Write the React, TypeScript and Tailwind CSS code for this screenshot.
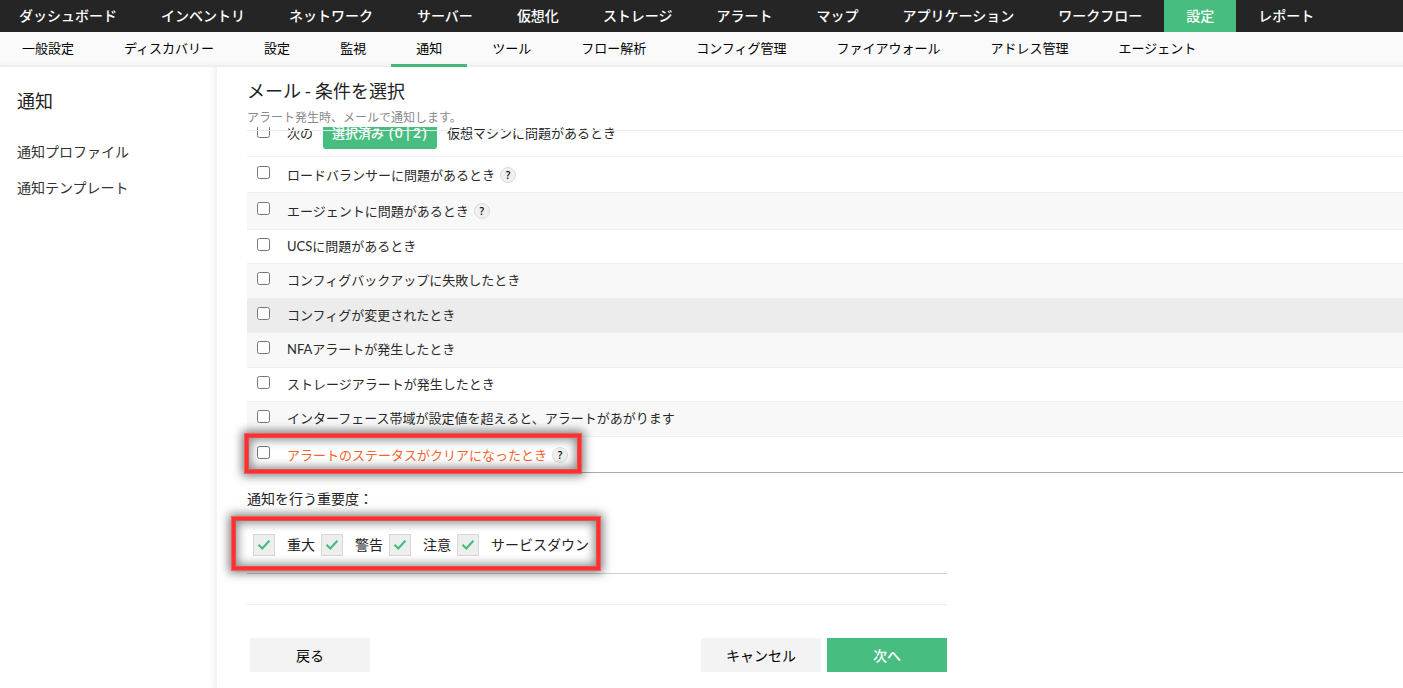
import React, { useState } from 'react';

const mainTabs = [
  'ダッシュボード',
  'インベントリ',
  'ネットワーク',
  'サーバー',
  '仮想化',
  'ストレージ',
  'アラート',
  'マップ',
  'アプリケーション',
  'ワークフロー',
  '設定',
  'レポート',
];

const subTabs = [
  '一般設定',
  'ディスカバリー',
  '設定',
  '監視',
  '通知',
  'ツール',
  'フロー解析',
  'コンフィグ管理',
  'ファイアウォール',
  'アドレス管理',
  'エージェント',
];

const criteria = [
  { label: 'ロードバランサーに問題があるとき', help: true, row: 'h-9 border-[#efefef]' },
  { label: 'エージェントに問題があるとき', help: true, row: 'h-[37px] bg-[#f8f8f8] border-[#efefef]' },
  { label: 'UCSに問題があるとき', row: 'h-[34px] border-[#efefef]' },
  { label: 'コンフィグバックアップに失敗したとき', row: 'h-[35px] bg-[#f8f8f8] border-[#efefef]' },
  { label: 'コンフィグが変更されたとき', row: 'h-[34px] bg-[#ececec] border-[#efefef]' },
  { label: 'NFAアラートが発生したとき', row: 'h-[35px] bg-[#f8f8f8] border-[#efefef]' },
  { label: 'ストレージアラートが発生したとき', row: 'h-[34px] border-[#efefef]' },
  { label: 'インターフェース帯域が設定値を超えると、アラートがあがります', row: 'h-[35px] bg-[#f8f8f8] border-[#efefef]' },
  { label: 'アラートのステータスがクリアになったとき', help: true, active: true, row: 'h-9 border-[#aaaaaa]' },
];

const severities = ['重大', '警告', '注意', 'サービスダウン'];

const HelpIcon = () => (
  <span className="ml-[5px] mt-2.5 flex h-4 w-4 items-center justify-center rounded-full border border-[#dcdcdc] bg-[#f0f0f0] font-['Open_Sans'] text-[10px] font-semibold leading-none text-black">
    ?
  </span>
);

const Highlight = ({ className }) => (
  <div
    className={`pointer-events-none absolute border-[3px] border-[#ff3030] shadow-[0_0_0_1px_#e86060,inset_0_0_0_1px_#e05050,0_0_9px_3px_rgba(0,0,0,0.5),inset_0_0_10px_3px_rgba(0,0,0,0.45)] ${className}`}
  />
);

const App = () => {
  const [checked, setChecked] = useState({});

  const toggle = (label) => setChecked((prev) => ({ ...prev, [label]: !prev[label] }));

  return (
    <div className="h-[688px] w-full overflow-hidden bg-white font-['Lato','Noto_Sans_CJK_JP',sans-serif] text-[#222]">
      <nav className="h-8 overflow-hidden bg-[#252525]">
        <div className="-ml-[3px] flex h-8">
          {mainTabs.map((tab) => (
            <a
              key={tab}
              className={`shrink-0 px-[22px] text-sm font-medium leading-[31px] text-white ${tab === '設定' ? 'bg-[#48bd80]' : ''}`}
            >
              {tab}
            </a>
          ))}
        </div>
      </nav>
      <nav className="h-[35px] overflow-hidden bg-[#fafafa] shadow-[inset_0_-4px_4px_-3px_rgba(0,0,0,0.09)]">
        <div className="-ml-[3px] flex h-[35px]">
          {subTabs.map((tab) => (
            <a
              key={tab}
              className={`shrink-0 border-b-[3px] px-[25px] text-[13px] leading-[33px] text-black ${tab === '通知' ? 'border-[#45b97c]' : 'border-transparent'}`}
            >
              {tab}
            </a>
          ))}
        </div>
      </nav>

      <div className="flex h-[621px]">
        <aside className="w-[217px] shrink-0 pl-[17px] pt-5 shadow-[inset_-9px_0_8px_-8px_rgba(0,0,0,0.09)]">
          <h2 className="text-lg leading-7">通知</h2>
          <ul className="mt-[18px] text-sm text-[#333]">
            <li className="h-9 leading-[37px]">通知プロファイル</li>
            <li className="h-9 leading-[37px]">通知テンプレート</li>
          </ul>
        </aside>

        <main className="relative min-w-0 grow pl-[30px]">
          <header className="h-[60px] pt-2.5">
            <h1 className="text-lg leading-7 [word-spacing:-1px]">メール - 条件を選択</h1>
            <p className="mt-1 text-xs leading-[18px] text-[#8a8a8a]">アラート発生時、メールで通知します。</p>
          </header>

          <div className="relative overflow-hidden">
            <div className="absolute inset-x-0 top-[3px] z-10 h-px bg-[#ececec]" />
            <div className="-mt-[11px] flex h-[41px] border-b border-[#efefef] pl-2.5 text-[13px]">
              <input type="checkbox" className="mt-[9px] h-[13px] w-[13px] shrink-0" />
              <span className="ml-[17px] leading-[34px]">次の</span>
              <span className="ml-2.5 flex h-[33px] w-[114px] justify-center rounded-[3px] bg-[#48bd80] text-[13px] font-medium leading-[34px] text-white">
                選択済み
                <span className="ml-[5px] font-['Noto_Sans'] text-sm leading-[34px] tracking-[1.3px]">(0|2)</span>
              </span>
              <span className="ml-2.5 leading-[34px]">仮想マシンに問題があるとき</span>
            </div>
            {criteria.map((item) => (
              <div key={item.label} className={`flex border-b pl-2.5 text-[13px] text-[#2a2a2a] ${item.row}`}>
                <input
                  type="checkbox"
                  checked={!!checked[item.label]}
                  onChange={() => toggle(item.label)}
                  className={`h-[13px] w-[13px] shrink-0 ${item.help ? 'mt-[9px]' : 'mt-2'}`}
                />
                <span
                  className={`ml-[17px] flex ${item.help ? 'leading-9' : 'leading-8'} ${item.active ? 'text-[#f8622c]' : ''}`}
                >
                  {item.label}
                  {item.help && <HelpIcon />}
                </span>
              </div>
            ))}
          </div>

          <p className="mt-3.5 h-6 text-sm leading-[23px]">通知を行う重要度：</p>
          <div className="mt-[23px] flex h-[40px] w-[700px] gap-1.5 border-b border-[#d2d2d2] pl-1.5 text-sm">
            {severities.map((s) => (
              <label key={s} className="flex h-[22px] items-center gap-3">
                <span className="flex h-[22px] w-[22px] items-center justify-center border border-[#d8d8d8] bg-[#eeeeee]">
                  <svg width="14" height="12" viewBox="0 0 14 12" fill="none" stroke="#3fbd7f" strokeWidth="2.1">
                    <path d="M1.5 5.8 5.3 9.5 12.4 1.8" />
                  </svg>
                </span>
                {s}
              </label>
            ))}
          </div>
          <div className="mt-[30px] h-px w-[700px] bg-[#ececec]" />

          <div className="mt-[33px] flex w-[700px] pl-[3px] text-sm text-black">
            <button className="h-[34px] w-[120px] bg-[#f3f3f3] pt-0.5">戻る</button>
            <button className="ml-auto h-[34px] w-[120px] bg-[#f3f3f3] pt-0.5">キャンセル</button>
            <button className="ml-1.5 h-[34px] w-[120px] bg-[#48bd80] pt-0.5 font-medium text-white">次へ</button>
          </div>

          <Highlight className="left-[28px] top-[367px] h-[39px] w-[336px]" />
          <Highlight className="left-[15px] top-[450px] h-[53px] w-[368px]" />
        </main>
      </div>
    </div>
  );
};

export default App;
